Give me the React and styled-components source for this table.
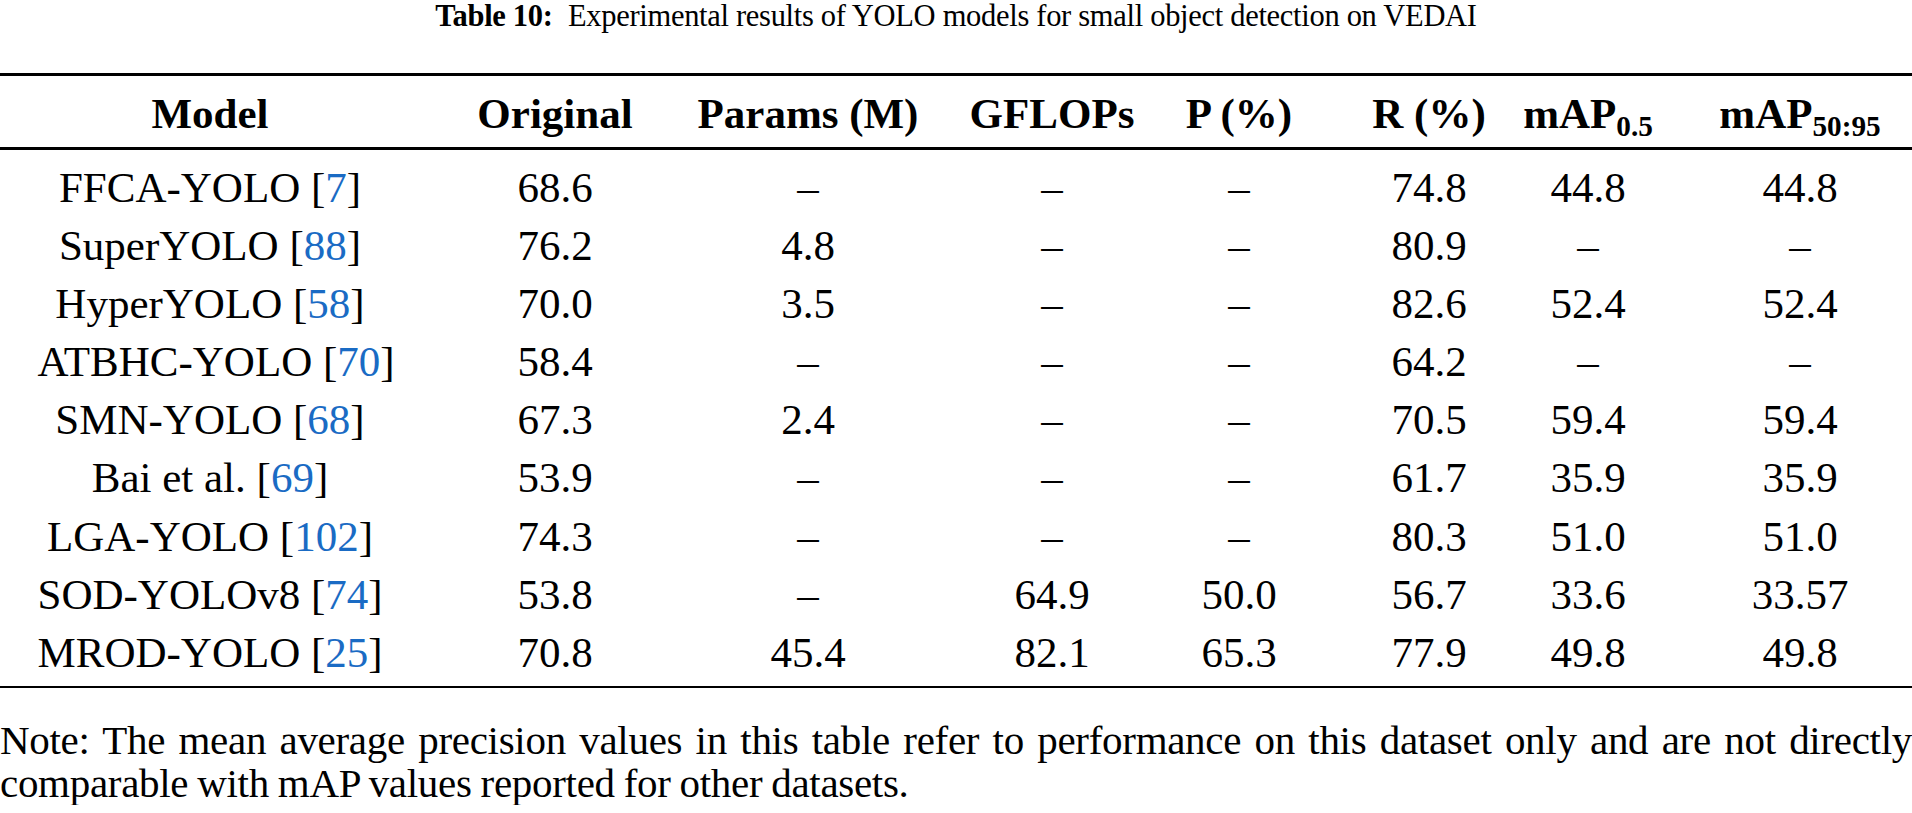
import React from "react";
import styled, { createGlobalStyle } from "styled-components";

const GlobalStyle = createGlobalStyle`
  html, body {
    margin: 0;
    padding: 0;
    background: #fff;
  }
  body {
    font-family: "Liberation Serif", "Times New Roman", serif;
    color: #000;
  }
`;

// column centres measured on the page, tracks are built around them
const CENTERS = [210, 555, 808, 1052, 1239, 1429, 1588, 1800];
const PAGE_WIDTH = 1912;
const bounds = [
  0,
  ...CENTERS.slice(1).map((c, i) => (CENTERS[i] + c) / 2),
  PAGE_WIDTH,
];
const TRACKS = bounds
  .slice(1)
  .map((b, i) => `${b - bounds[i]}px`)
  .join(" ");
const SHIFTS = CENTERS.map((c, i) => c - (bounds[i] + bounds[i + 1]) / 2);

const Page = styled.div`
  width: ${PAGE_WIDTH}px;
`;

const Caption = styled.div`
  font-size: 30.5px;
  line-height: 32px;
  letter-spacing: -0.3px;
  text-align: center;
  margin-bottom: 41px;

  b {
    font-weight: 700;
    margin-right: 8px;
  }
`;

const Table = styled.div`
  border-top: 3px solid #000;
  border-bottom: 2px solid #000;
`;

const Row = styled.div`
  display: grid;
  grid-template-columns: ${TRACKS};
  font-size: 43px;
`;

const HeadRow = styled(Row)`
  font-weight: 700;
  line-height: 67px;
  padding-top: 4px;
  border-bottom: 3px solid #000;
`;

const Body = styled.div`
  padding: 9px 0 4px;
`;

const BodyRow = styled(Row)`
  height: 58.1px;
  line-height: 58.1px;
`;

const Cell = styled.div`
  text-align: center;
  white-space: nowrap;
  padding-left: ${(p) => Math.max(0, p.$shift * 2)}px;
  padding-right: ${(p) => Math.max(0, -p.$shift * 2)}px;
`;

const Sub = styled.sub`
  font-size: 0.68em;
  vertical-align: -0.28em;
  line-height: 0;
`;

const Cite = styled.span`
  color: #1a6bc4;
`;

const Note = styled.div`
  margin-top: 31px;
  font-size: 41px;
  line-height: 43px;
  letter-spacing: -0.3px;
  word-spacing: -1px;
`;

const NoteLine = styled.div`
  white-space: nowrap;
  text-align: ${(p) => (p.$full ? "justify" : "left")};
  text-align-last: ${(p) => (p.$full ? "justify" : "left")};
`;

const headers = [
  "Model",
  "Original",
  "Params (M)",
  "GFLOPs",
  "P (%)",
  "R (%)",
  <>
    mAP<Sub>0.5</Sub>
  </>,
  <>
    mAP<Sub>50:95</Sub>
  </>,
];

const D = "–";

const rows = [
  ["FFCA-YOLO", "7", "68.6", D, D, D, "74.8", "44.8", "44.8"],
  ["SuperYOLO", "88", "76.2", "4.8", D, D, "80.9", D, D],
  ["HyperYOLO", "58", "70.0", "3.5", D, D, "82.6", "52.4", "52.4"],
  ["ATBHC-YOLO", "70", "58.4", D, D, D, "64.2", D, D],
  ["SMN-YOLO", "68", "67.3", "2.4", D, D, "70.5", "59.4", "59.4"],
  ["Bai et al.", "69", "53.9", D, D, D, "61.7", "35.9", "35.9"],
  ["LGA-YOLO", "102", "74.3", D, D, D, "80.3", "51.0", "51.0"],
  ["SOD-YOLOv8", "74", "53.8", D, "64.9", "50.0", "56.7", "33.6", "33.57"],
  ["MROD-YOLO", "25", "70.8", "45.4", "82.1", "65.3", "77.9", "49.8", "49.8"],
];

function App() {
  return (
    <Page>
      <GlobalStyle />
      <Caption>
        <b>Table 10:</b> Experimental results of YOLO models for small object
        detection on VEDAI
      </Caption>
      <Table>
        <HeadRow>
          {headers.map((h, i) => (
            <Cell key={i} $shift={SHIFTS[i]}>
              {h}
            </Cell>
          ))}
        </HeadRow>
        <Body>
          {rows.map(([name, ref, ...values]) => (
            <BodyRow key={name}>
              <Cell $shift={SHIFTS[0]}>
                {name} [<Cite>{ref}</Cite>]
              </Cell>
              {values.map((v, i) => (
                <Cell key={i} $shift={SHIFTS[i + 1]}>
                  {v}
                </Cell>
              ))}
            </BodyRow>
          ))}
        </Body>
      </Table>
      <Note>
        <NoteLine $full>
          Note: The mean average precision values in this table refer to
          performance on this dataset only and are not directly
        </NoteLine>
        <NoteLine>comparable with mAP values reported for other datasets.</NoteLine>
      </Note>
    </Page>
  );
}

export default App;
